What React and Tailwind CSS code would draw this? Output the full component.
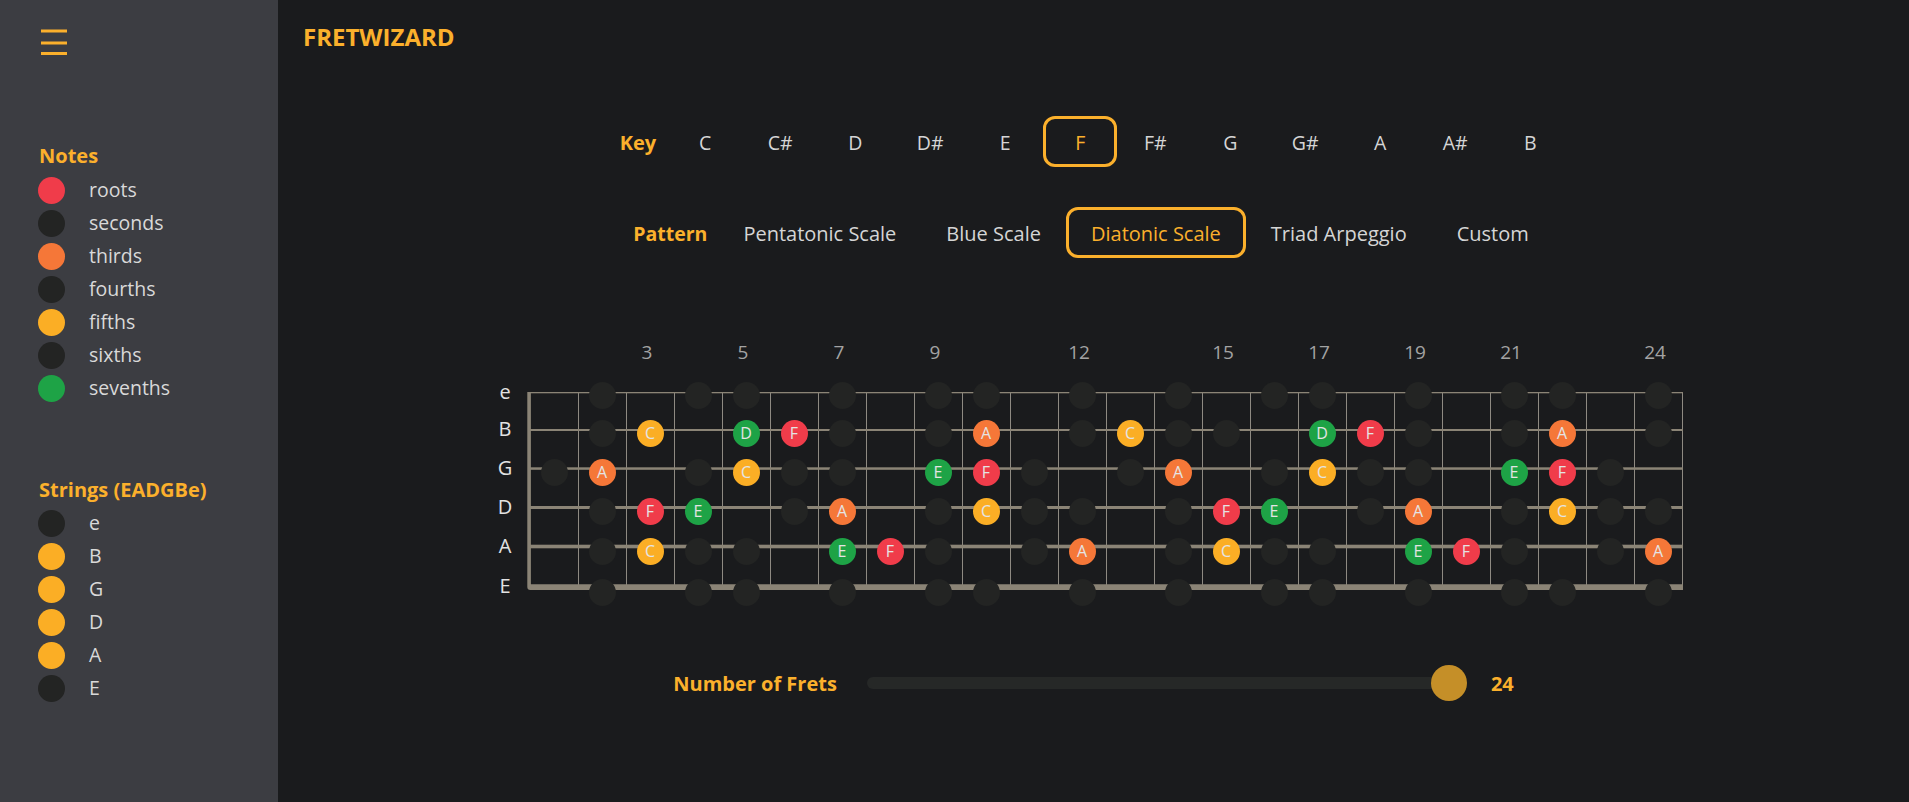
import { useState } from 'react';

const dark = 'bg-[#232423]';

const noteColors = {
  F: 'bg-[#f03c4a]',
  A: 'bg-[#f57738]',
  C: 'bg-[#fbae25]',
  D: 'bg-[#1ea346]',
  E: 'bg-[#1ea346]',
};

const noteLegend = [
  { label: 'roots', color: 'bg-[#f03c4a]' },
  { label: 'seconds', color: dark },
  { label: 'thirds', color: 'bg-[#f57738]' },
  { label: 'fourths', color: dark },
  { label: 'fifths', color: 'bg-[#fbae25]' },
  { label: 'sixths', color: dark },
  { label: 'sevenths', color: 'bg-[#1ea346]' },
];

const stringLegend = [
  { label: 'e', color: dark },
  { label: 'B', color: 'bg-[#fbae25]' },
  { label: 'G', color: 'bg-[#fbae25]' },
  { label: 'D', color: 'bg-[#fbae25]' },
  { label: 'A', color: 'bg-[#fbae25]' },
  { label: 'E', color: dark },
];

const keys = ['C', 'C#', 'D', 'D#', 'E', 'F', 'F#', 'G', 'G#', 'A', 'A#', 'B'];
const patterns = ['Pentatonic Scale', 'Blue Scale', 'Diatonic Scale', 'Triad Arpeggio', 'Custom'];
const fretMarks = [3, 5, 7, 9, 12, 15, 17, 19, 21, 24];

// cell -> label ('' = muted dot)
const outer = { 2: '', 4: '', 5: '', 7: '', 9: '', 10: '', 12: '', 14: '', 16: '', 17: '', 19: '', 21: '', 22: '', 24: '' };

const strings = [
  { name: 'e', dotMt: 'mt-[2px]', labelMt: '-mt-[2px]', notes: outer },
  {
    name: 'B', dotMt: 'mt-[11px]', labelMt: 'mt-[9.5px]',
    notes: { 2: '', 3: 'C', 5: 'D', 6: 'F', 7: '', 9: '', 10: 'A', 12: '', 13: 'C', 14: '', 15: '', 17: 'D', 18: 'F', 19: '', 21: '', 22: 'A', 24: '' },
  },
  {
    name: 'G', dotMt: 'mt-[12px]', labelMt: 'mt-[10.5px]',
    notes: { 1: '', 2: 'A', 4: '', 5: 'C', 6: '', 7: '', 9: 'E', 10: 'F', 11: '', 13: '', 14: 'A', 16: '', 17: 'C', 18: '', 19: '', 21: 'E', 22: 'F', 23: '' },
  },
  {
    name: 'D', dotMt: 'mt-[12px]', labelMt: 'mt-[11px]',
    notes: { 2: '', 3: 'F', 4: 'E', 6: '', 7: 'A', 9: '', 10: 'C', 11: '', 12: '', 14: '', 15: 'F', 16: 'E', 18: '', 19: 'A', 21: '', 22: 'C', 23: '', 24: '' },
  },
  {
    name: 'A', dotMt: 'mt-[13px]', labelMt: 'mt-[11px]',
    notes: { 2: '', 3: 'C', 4: '', 5: '', 7: 'E', 8: 'F', 9: '', 11: '', 12: 'A', 14: '', 15: 'C', 16: '', 17: '', 19: 'E', 20: 'F', 21: '', 23: '', 24: 'A' },
  },
  { name: 'E', dotMt: 'mt-[14px]', labelMt: 'mt-[12.5px]', notes: outer },
];

const cells = Array.from({ length: 24 }, (_, i) => i + 1);

const stringLines = [
  { y: 12, h: 1.3 },
  { y: 49, h: 2 },
  { y: 87.3, h: 2.5 },
  { y: 126, h: 3 },
  { y: 164.7, h: 3.6 },
];

function Dot({ color, label }) {
  return (
    <div className={`w-[27px] h-[27px] rounded-full ${color} flex items-center justify-center text-[16px] leading-none text-[#e4e4e4]`}>
      {label}
    </div>
  );
}

function Sidebar() {
  return (
    <aside className="w-[278px] shrink-0 bg-[#3c3d42] pl-[38px] pt-[28px]">
      <svg width="27" height="28" viewBox="0 0 27 28" className="ml-[3px]">
        <rect x="0" y="1.5" width="26" height="3" fill="#fbb02c" />
        <rect x="0" y="13.5" width="26" height="3" fill="#fbb02c" />
        <rect x="0" y="24" width="26" height="3" fill="#fbb02c" />
      </svg>

      <h3 className="mt-[86px] ml-[1px] text-[20px] leading-[28px] font-bold text-[#fbb02c]">Notes</h3>
      <ul className="mt-[4px]">
        {noteLegend.map((n) => (
          <li key={n.label} className="h-[33px] flex items-center gap-[24px]">
            <span className={`w-[27px] h-[27px] rounded-full ${n.color}`}></span>
            <span className="text-[19.5px] leading-[26px] -mt-[1px] text-[#d9d9d9]">{n.label}</span>
          </li>
        ))}
      </ul>

      <h3 className="mt-[71px] ml-[1px] text-[20px] leading-[28px] font-bold text-[#fbb02c]">Strings (EADGBe)</h3>
      <ul className="mt-[3px]">
        {stringLegend.map((s) => (
          <li key={s.label} className="h-[33px] flex items-center gap-[24px]">
            <span className={`w-[27px] h-[27px] rounded-full ${s.color}`}></span>
            <span className="text-[19.5px] leading-[26px] -mt-[2px] text-[#d9d9d9]">{s.label}</span>
          </li>
        ))}
      </ul>
    </aside>
  );
}

function Fretboard() {
  return (
    <div className="pr-[10px]">
      {/* fret numbers */}
      <div className="flex pl-[34px] h-[26px]">
        {cells.map((c) => (
          <div key={c} className="w-[48px] text-center text-[19px] leading-[26px] text-[#a3a3a3]">
            {fretMarks.includes(c) ? c : ''}
          </div>
        ))}
      </div>

      <div className="flex gap-[10px] mt-[14.6px]">
        <div className="w-[24px] flex flex-col">
          {strings.map((s) => (
            <div key={s.name} className={`${s.labelMt} h-[28px] text-center text-[20px] leading-[28px] text-[#e2e2e2]`}>
              {s.name}
            </div>
          ))}
        </div>

        <div className="relative w-[1157px] h-[230px]">
          <svg width="1157" height="230" className="absolute left-0 top-0">
            {cells.map((n) => (
              <rect key={n} x={3 + 48 * n} y="12" width="1" height="193" fill="#8e8a82" />
            ))}
            {stringLines.map((l, i) => (
              <rect key={i} x="3" y={l.y} width="1153" height={l.h} fill="#8b8476" />
            ))}
            <path d="M0.3 12 H3.9 V204.3 H1156 V210 H3.3 Q0.3 210 0.3 207 Z" fill="#8b8476" />
          </svg>

          <div className="relative flex flex-col pl-[3px]">
            {strings.map((s) => (
              <div key={s.name} className={`${s.dotMt} flex h-[27px]`}>
                {cells.map((c) => {
                  const label = s.notes[c];
                  return (
                    <div key={c} className="w-[48px] flex justify-center">
                      {label !== undefined && (
                        <Dot color={label ? noteColors[label] : dark} label={label} />
                      )}
                    </div>
                  );
                })}
              </div>
            ))}
          </div>
        </div>
      </div>
    </div>
  );
}

export default function App() {
  const [selectedKey, setSelectedKey] = useState('F');
  const [pattern, setPattern] = useState('Diatonic Scale');

  return (
    <div className="flex min-h-screen bg-[#1a1b1d] font-['Open_Sans',sans-serif]">
      <Sidebar />

      <main className="flex-1 flex flex-col">
        <header className="pl-[25px] pt-[21px] text-[24px] leading-8 font-bold text-[#fbb02c]">FRETWIZARD</header>

        <div className="flex flex-col items-center">
          <div className="mt-[63px] flex items-center">
            <span className="mr-[12px] pt-[3px] text-[20px] font-bold text-[#fbb02c]">Key</span>
            <div className="flex gap-[1px]">
              {keys.map((k) => (
                <button
                  key={k}
                  onClick={() => setSelectedKey(k)}
                  className={`w-[74px] h-[51px] pt-[3px] rounded-[12px] border-[3px] text-[19.5px] ${
                    k === selectedKey ? 'border-[#fbb02c] text-[#fbb02c]' : 'border-transparent text-[#d5d5d5]'
                  }`}
                >
                  {k}
                </button>
              ))}
            </div>
          </div>

          <div className="mt-[40px] flex items-center">
            <span className="mr-[11px] pt-[3px] text-[19.5px] font-bold text-[#fbb02c]">Pattern</span>
            <div className="flex">
              {patterns.map((p) => (
                <button
                  key={p}
                  onClick={() => setPattern(p)}
                  className={`h-[51px] pt-[3px] px-[22px] rounded-[12px] border-[3px] text-[20px] ${
                    p === pattern ? 'border-[#fbb02c] text-[#fbb02c]' : 'border-transparent text-[#d5d5d5]'
                  }`}
                >
                  {p}
                </button>
              ))}
            </div>
          </div>

          <div className="mt-[81px]">
            <Fretboard />
          </div>

          <div className="mt-[55px] h-[36px] flex items-center">
            <span className="pt-[2px] text-[20px] font-bold text-[#fbb02c]">Number of Frets</span>
            <div className="ml-[30px] w-[600px] h-[12px] rounded-full bg-[#262827] flex items-center justify-end">
              <div className="w-[36px] h-[36px] rounded-full bg-[#c58f28]"></div>
            </div>
            <span className="ml-[24px] pt-[2px] text-[20px] font-bold text-[#fbb02c]">24</span>
          </div>
        </div>
      </main>
    </div>
  );
}
